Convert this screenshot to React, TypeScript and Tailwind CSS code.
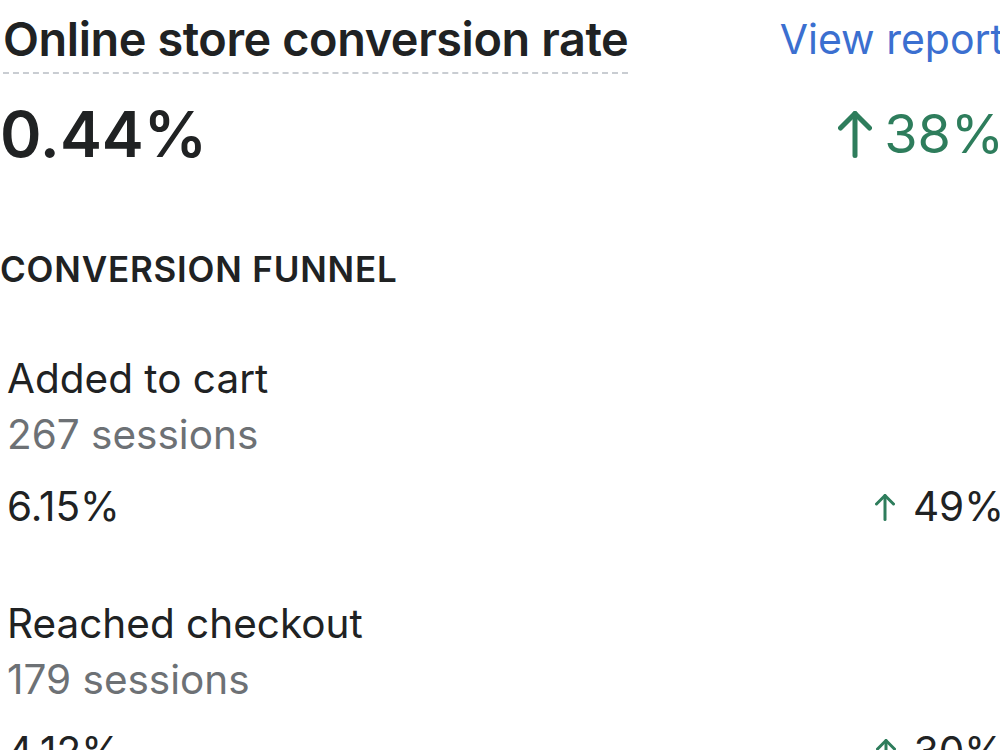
import React from "react";

function Arrow({ w, h, sw }: { w: number; h: number; sw: number }) {
  return (
    <svg width={w} height={h} viewBox={`0 0 ${w} ${h}`} fill="none" stroke="#2e7d5c" strokeWidth={sw} strokeLinecap="round" strokeLinejoin="round">
      <path d={`M${w / 2} ${h - sw / 2}V${sw / 2}`} />
      <path d={`M${sw / 2} ${w / 2}L${w / 2} ${sw / 2}L${w - sw / 2} ${w / 2}`} />
    </svg>
  );
}

function Row({ title, sessions, pct, change, last }: { title: string; sessions: string; pct: string; change: string; last?: boolean }) {
  return (
    <div className={last ? "" : "mb-[61px]"}>
      <div className="pl-[4px] text-[40.5px] leading-[56px] text-[#202223]">{title}</div>
      <div className="pl-[4px] text-[40.5px] leading-[56px] text-[#6d7175]">{sessions}</div>
      <div className="mt-[16px] flex items-center justify-between pl-[4px] text-[40.5px] leading-[56px] text-[#202223]">
        <span>{pct}</span>
        <span className="flex items-center gap-[18px]">
          <Arrow w={20} h={27} sw={3} />
          <span>{change}</span>
        </span>
      </div>
    </div>
  );
}

export default function App() {
  return (
    <div className="h-[750px] w-[1000px] overflow-hidden bg-white" style={{ fontFamily: "Inter, 'Noto Sans', sans-serif" }}>
      <div className="w-[1004px] pl-[3px] pt-[14px]">
        <div className="flex items-start justify-between">
          <div className="border-b-[2px] border-dashed border-[#c9cdd2] pb-[8px] text-[46.8px] font-semibold leading-[50px] tracking-[-0.4px] text-[#202223]">
            Online store conversion rate
          </div>
          <div className="whitespace-nowrap text-[41px] leading-[50px] text-[#3b6fd0]">View report</div>
        </div>
        <div className="mt-[22px] flex items-center justify-between">
          <div className="-ml-[3px] text-[63px] font-semibold leading-[76px] text-[#202223]">0.44%</div>
          <div className="flex items-center gap-[12px] text-[54px] leading-[76px] text-[#2e7d5c]">
            <Arrow w={34} h={47} sw={5} />
            <span>38%</span>
          </div>
        </div>
        <div className="-ml-[3px] mt-[77px] text-[35px] font-semibold leading-[40px] tracking-[0.8px] text-[#202223]">CONVERSION FUNNEL</div>
        <div className="mt-[62px]">
          <Row title="Added to cart" sessions="267 sessions" pct="6.15%" change="49%" />
          <Row title="Reached checkout" sessions="179 sessions" pct="4.12%" change="30%" last />
        </div>
      </div>
    </div>
  );
}
